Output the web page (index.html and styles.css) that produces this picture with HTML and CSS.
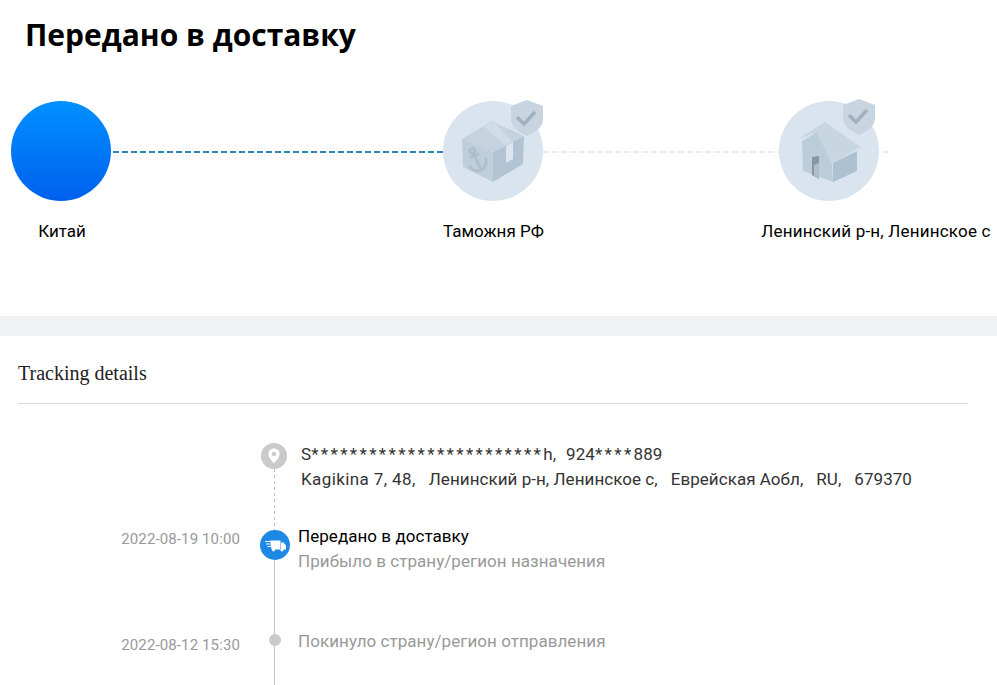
FILE: index.html
```html
<!DOCTYPE html>
<html lang="ru">
<head>
    <meta charset="UTF-8">
    <meta name="viewport" content="width=device-width, initial-scale=1.0">
    <title>Передано в доставку</title>
    <link rel="stylesheet" href="styles.css">
</head>
<body>
    <section class="status">
        <h1>Передано в доставку</h1>

        <div class="track">
            <div class="node node-active"></div>
            <div class="link link-done"></div>
            <div class="node">
                <svg class="node-art" viewBox="0 0 100 100">
                    <polygon points="19,38 49,20 81,35 50,51" fill="#c5d3df"/>
                    <polygon points="40,25 50,20 70,41 63,45" fill="#d0dce7"/>
                    <polygon points="19,38 50,51 50,81 20,66" fill="#bfcedb"/>
                    <polygon points="50,51 81,35 80,63 50,81" fill="#b2c4d3"/>
                    <polygon points="63,45 70,41 70,58 63,62" fill="#dde6ef"/>
                    <g transform="rotate(-25 34 60)" fill="none" stroke="#afc0cd" stroke-width="2.800">
                        <path d="M34 50v20M25 61c1 5 4 9 9 9s8-4 9-9M29 54h10"/>
                        <circle cx="34" cy="49" r="2.500"/>
                    </g>
                    <path d="M84 -1l16 6v13c0 8-7 13-16 17-9-4-16-9-16-17V5z" fill="#c8d5e0"/>
                    <path d="M74 16l7 7 11-12" fill="none" stroke="#a0b0bd" stroke-width="3.400"/>
                </svg>
            </div>
            <div class="link link-todo link-long"></div>
            <div class="node">
                <svg class="node-art" viewBox="0 0 100 100">
                    <polygon points="23,40 38,31 53,62 54,81 24,70" fill="#bccdda"/>
                    <polygon points="54,62 78,50 78,70 54,81" fill="#aec1d0"/>
                    <polygon points="18,39 46,21 82,46 53,62 38,31" fill="#c8d6e2"/>
                    <polygon points="33,56 40,55 40,78 33,74" fill="#8697a4"/>
                    <polygon points="35,64 40,62 40,78 35,75" fill="#aebecb"/>
                    <path d="M80 -2l16 6v13c0 8-7 13-16 17-9-4-16-9-16-17V4z" fill="#c8d5e0"/>
                    <path d="M70 14l7 7 11-12" fill="none" stroke="#a0b0bd" stroke-width="3.400"/>
                </svg>
            </div>
            <div class="link link-todo link-tail"></div>
        </div>

        <div class="track-labels">
            <span class="place place-origin">Китай</span>
            <span class="place place-customs">Таможня РФ</span>
            <span class="place place-city">Ленинский р-н, Ленинское с</span>
        </div>
    </section>

    <section class="details">
        <h2>Tracking details</h2>

        <div class="timeline">
            <div class="row row-address">
                <div class="row-time"></div>
                <div class="axis">
                    <span class="mark mark-pin">
                        <svg viewBox="0 0 26 26" width="26" height="26">
                            <path fill-rule="evenodd" d="M13 5.500c-3.200 0-5.600 2.400-5.600 5.400 0 3.600 3.600 7 5.600 9.600 2-2.600 5.600-6 5.600-9.600 0-3-2.400-5.400-5.600-5.400zm0 3.300a2.200 2.200 0 1 1 0 4.400a2.200 2.200 0 0 1 0-4.400z" fill="#fff"/>
                        </svg>
                    </span>
                    <span class="axis-line axis-dashed"></span>
                </div>
                <div class="row-text address">
                    <p class="address-line">
                        <span>S<span class="mask">************************</span>h,</span>
                        <span>924<span class="mask">****</span>889</span>
                    </p>
                    <p class="address-line">
                        <span class="street">Kagikina 7, 48,</span>
                        <span>Ленинский р-н, Ленинское с,</span>
                        <span>Еврейская Аобл,</span>
                        <span>RU,</span>
                        <span>679370</span>
                    </p>
                </div>
            </div>

            <div class="row row-current">
                <div class="row-time">2022-08-19 10:00</div>
                <div class="axis">
                    <span class="mark mark-truck">
                        <svg viewBox="0 0 30 30" width="30" height="30">
                            <path d="M10.500 10.500h10v9h-9zM21 12.500h2.500l2.500 3v4h-5z" fill="#fff"/>
                            <circle cx="13.500" cy="19.800" r="1.600" fill="#fff"/>
                            <circle cx="22" cy="19.800" r="1.600" fill="#fff"/>
                            <path d="M5 11.500h6M6 14h6M7.500 16.500h5" stroke="#fff" stroke-width="1.100"/>
                        </svg>
                    </span>
                    <span class="axis-line"></span>
                </div>
                <div class="row-text">
                    <p class="event-now">Передано в доставку</p>
                    <p class="event-sub">Прибыло в страну/регион назначения</p>
                </div>
            </div>

            <div class="row row-last">
                <div class="row-time">2022-08-12 15:30</div>
                <div class="axis">
                    <span class="mark mark-dot"></span>
                    <span class="axis-line"></span>
                </div>
                <div class="row-text">
                    <p class="event-sub">Покинуло страну/регион отправления</p>
                </div>
            </div>
        </div>
    </section>
</body>
</html>
```

FILE: styles.css
```css
html, body {
    height: 100%;
}

body {
    margin: 0;
    font-family: Roboto, "Open Sans", sans-serif;
    color: #000;
    background: #fff;
    overflow: hidden;
}

p {
    margin: 0;
}

/* верхний блок со статусом */
.status {
    height: 316px;
    border-bottom: 20px solid #eff1f3;
}

h1 {
    margin: 0;
    padding: 14px 0 0 25px;
    font-family: "Open Sans", sans-serif;
    font-size: 30px;
    line-height: 42px;
    font-weight: 700;
}

.track {
    display: flex;
    align-items: center;
    margin-top: 45px;
    padding-left: 11px;
}

.node {
    flex: none;
    width: 100px;
    height: 100px;
    border-radius: 50%;
    background: #dae4ef;
}

.node-active {
    background: linear-gradient(180deg, #0090ff, #0060ee);
}

.node-art {
    display: block;
    width: 100px;
    height: 100px;
    overflow: visible;
    filter: blur(0.4px);
}

.link {
    flex: none;
    width: 332px;
    height: 2px;
    margin-top: 1px;
}

.link-done {
    background: repeating-linear-gradient(270deg, #2c84b4 0 6px, transparent 6px 9px);
}

.link-todo {
    background: repeating-linear-gradient(90deg, #e9edf0 0 6px, transparent 6px 9px);
}

.link-long {
    width: 236px;
}

.link-tail {
    width: 9px;
    background: repeating-linear-gradient(270deg, #e9edf0 0 5px, transparent 5px 9px);
}

.track-labels {
    display: flex;
    margin-top: 18px;
    padding-left: 11px;
    font-size: 17px;
    line-height: 24px;
}

.place {
    flex: none;
    width: 100px;
    text-align: center;
    white-space: nowrap;
}

.place-origin {
    box-sizing: border-box;
    padding-left: 2px;
}

.place-customs {
    margin-left: 332px;
}

.place-city {
    width: 230px;
    margin-left: 218px;
    letter-spacing: 0.2px;
}

/* история доставки */
.details {
    padding: 0 29px 0 18px;
}

h2 {
    margin: 0;
    height: 67px;
    border-bottom: 1px solid #d9d9d9;
    font-family: "Liberation Serif", serif;
    font-size: 20px;
    line-height: 75px;
    font-weight: 400;
    color: #222;
}

.timeline {
    padding-top: 39px;
}

.row {
    display: grid;
    grid-template-columns: 222px 58px 1fr;
}

.row-address {
    height: 87px;
}

.row-current {
    height: 104px;
}

.row-last {
    height: 60px;
}

.row-time {
    text-align: right;
    font-size: 15px;
    line-height: 20px;
    letter-spacing: 0.12px;
    color: #999;
}

.row-current .row-time {
    margin-top: -1px;
}

.row-last .row-time {
    margin-top: 1px;
}

.axis {
    display: flex;
    flex-direction: column;
    align-items: center;
    padding-left: 11px;
}

.axis-line {
    flex: 1;
    width: 1px;
    background: #c4c4c4;
}

.axis-dashed {
    background: repeating-linear-gradient(180deg, #c4c4c4 0 3px, transparent 3px 6px);
}

.mark {
    flex: none;
    display: block;
    border-radius: 50%;
}

.mark svg {
    display: block;
}

.mark-pin {
    width: 26px;
    height: 26px;
    margin-right: 1px;
    background: #cacaca;
}

.mark-truck {
    width: 30px;
    height: 30px;
    background: #1e88e5;
}

.mark-dot {
    width: 12px;
    height: 12px;
    background: #cacaca;
}

.row-text {
    font-size: 17px;
    line-height: 25px;
    letter-spacing: 0.05px;
}

.row-current .row-text {
    margin-top: -6px;
}

.row-last .row-text {
    margin-top: -5px;
}

.address {
    margin-top: -1px;
    padding-left: 3px;
    color: #333;
}

.address-line {
    display: flex;
    gap: 13px;
}

.address-line:first-child {
    gap: 10px;
}

.mask {
    letter-spacing: 2.35px;
}

.street {
    letter-spacing: 0.4px;
}

.event-now {
    color: #000;
}

.event-sub {
    color: #999;
}
```
